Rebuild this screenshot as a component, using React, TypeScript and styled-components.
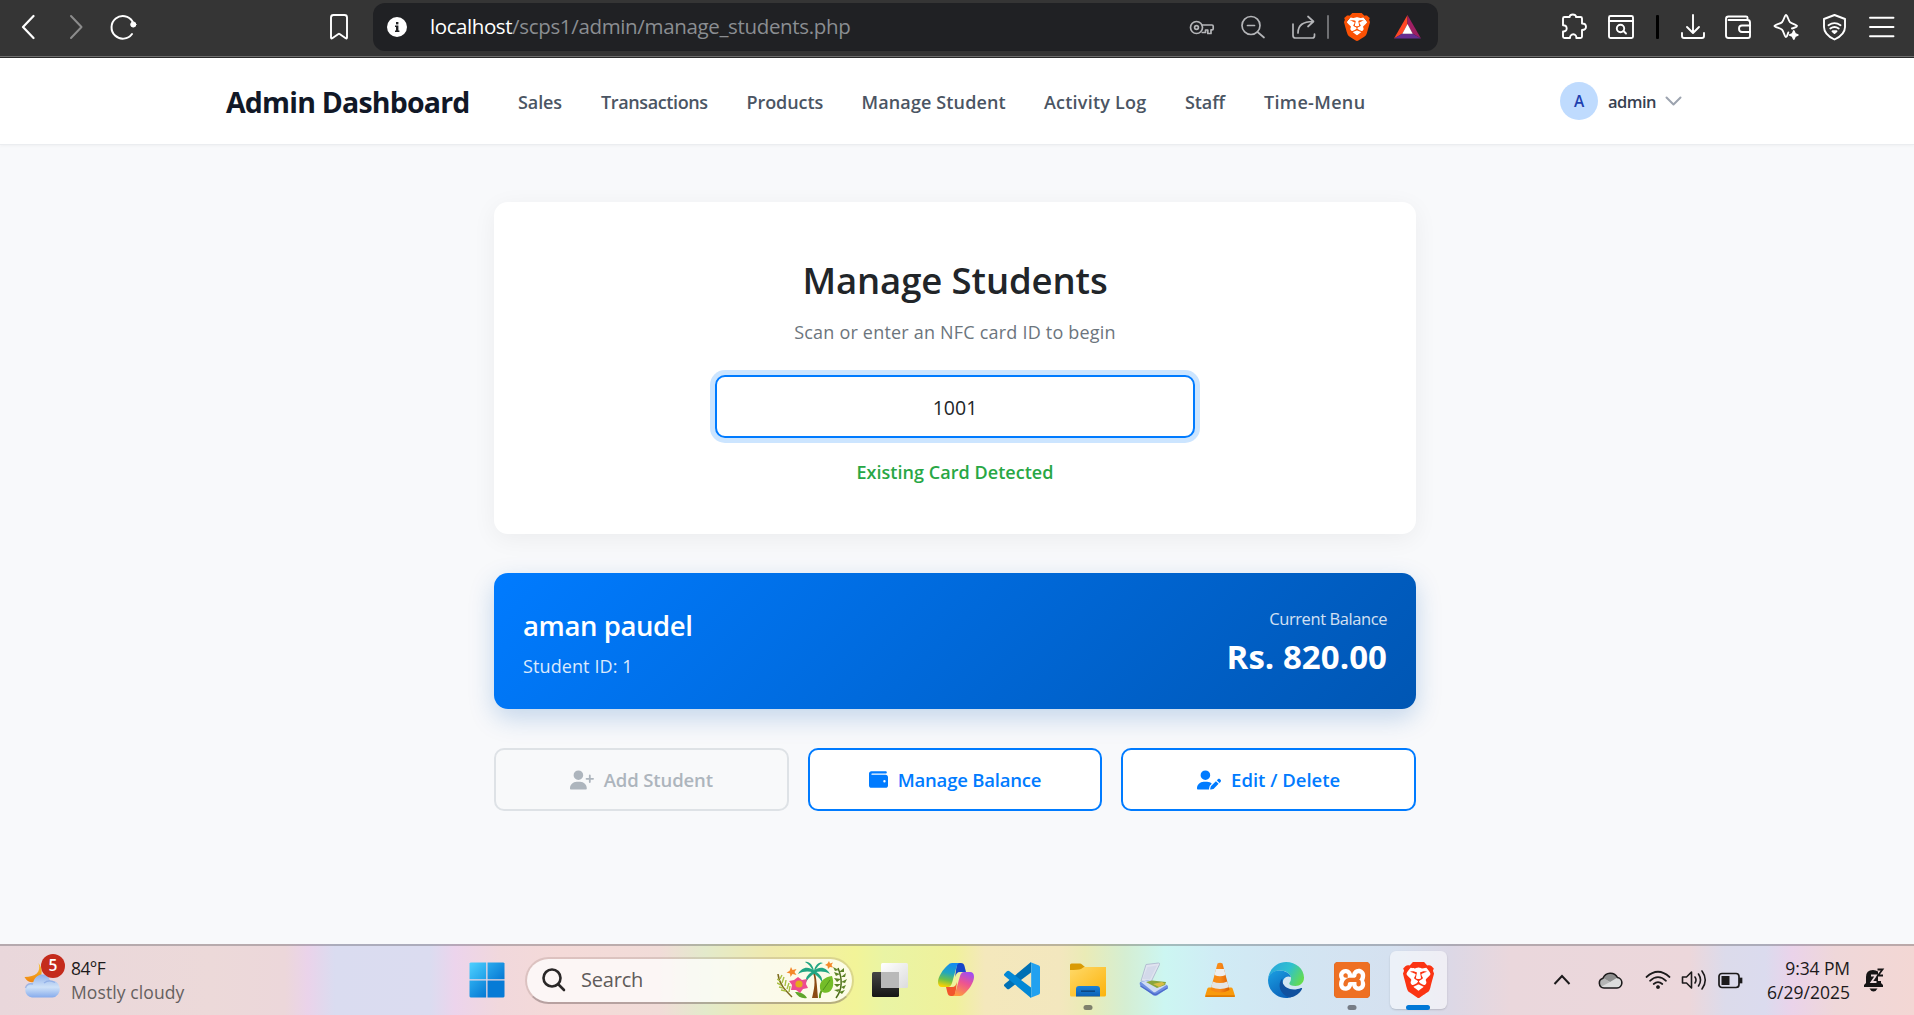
import React from 'react';
import styled, { createGlobalStyle } from 'styled-components';
import { SiBrave, SiXampp } from 'react-icons/si';
import { FaUserPlus, FaWallet, FaUserPen } from 'react-icons/fa6';

const GlobalStyle = createGlobalStyle`
  * { box-sizing: border-box; }
  body {
    margin: 0;
    overflow: hidden;
    font-family: "Open Sans", "Noto Sans", sans-serif;
    background: #f8f9fb;
  }
  svg { display: block; flex: none; }
`;

const Screen = styled.div`
  width: 1914px;
  height: 1015px;
  display: flex;
  flex-direction: column;
`;

/* ---------- browser toolbar ---------- */

const BrowserBar = styled.header`
  height: 58px;
  flex: none;
  display: flex;
  align-items: center;
  padding: 0 18px 4px 21px;
  background: #353535;
  border-bottom: 1px solid #2b2b2b;
  box-shadow: inset 0 -1px 0 #6e6e6e;
`;

const ToolIcon = styled.span<{ $gap?: number; $color?: string }>`
  display: flex;
  flex: none;
  margin-left: ${(p) => p.$gap ?? 0}px;
  color: ${(p) => p.$color ?? '#ffffff'};
`;

const AddressBar = styled.div`
  width: 1065px;
  height: 48px;
  flex: none;
  margin-left: 24px;
  padding: 0 16px 0 14px;
  display: flex;
  align-items: center;
  border-radius: 12px;
  background: #202124;
`;

const InfoDot = styled.span`
  width: 20px;
  height: 20px;
  border-radius: 50%;
  background: #ffffff;
  display: flex;
  align-items: center;
  justify-content: center;
`;

const Url = styled.span`
  flex: 1;
  margin: 0 0 1px 23px;
  font-size: 20.5px;
  line-height: 28px;
  letter-spacing: -0.34px;
  color: #8b8e92;
  white-space: nowrap;
`;

const Host = styled.span`
  color: #ffffff;
  letter-spacing: -0.42px;
`;

const Divider = styled.span<{ $dark?: boolean; $gap: number }>`
  width: ${(p) => (p.$dark ? 3 : 2)}px;
  height: 24px;
  margin-left: ${(p) => p.$gap}px;
  border-radius: 1px;
  background: ${(p) => (p.$dark ? '#000000' : '#6f7073')};
`;

const Extensions = styled.div`
  display: flex;
  align-items: center;
  margin-left: 122px;
`;

const LionBadge = styled.span<{ $gap?: number }>`
  display: flex;
  margin-left: ${(p) => p.$gap ?? 0}px;
`;

/* ---------- page ---------- */

const Page = styled.div`
  flex: 1;
  display: flex;
  flex-direction: column;
  background: #f8f9fb;
`;

const NavBar = styled.nav`
  height: 87px;
  flex: none;
  display: flex;
  align-items: center;
  padding: 2px 232px 0 226px;
  background: #ffffff;
  border-bottom: 1px solid #ebedf0;
  box-shadow: 0 1px 3px rgba(0, 0, 0, 0.04);
`;

const Brand = styled.div`
  width: 292px;
  font-size: 28.5px;
  line-height: 40px;
  font-weight: 700;
  letter-spacing: -0.8px;
  color: #111827;
  white-space: nowrap;
`;

const NavLinks = styled.div`
  display: flex;
  gap: 38px;
`;

const NavLink = styled.a<{ $width: number; $track: number }>`
  width: ${(p) => p.$width}px;
  font-size: 18px;
  line-height: 28px;
  font-weight: 600;
  letter-spacing: ${(p) => p.$track}px;
  color: #4b5563;
  white-space: nowrap;
`;

const Account = styled.div`
  margin: 0 0 2px auto;
  display: flex;
  align-items: center;
`;

const Avatar = styled.span`
  width: 38px;
  height: 38px;
  border-radius: 50%;
  display: flex;
  align-items: center;
  justify-content: center;
  background: #bfdbfe;
  color: #1e40af;
  font-size: 15.5px;
  font-weight: 600;
  line-height: 22px;
`;

const AccountName = styled.span`
  width: 57px;
  margin: 2px 0 0 10px;
  font-size: 16.5px;
  line-height: 24px;
  font-weight: 600;
  letter-spacing: -0.55px;
  color: #374151;
`;

const Main = styled.main`
  width: 922px;
  margin: 57px auto 0 494px;
  display: flex;
  flex-direction: column;
`;

const ScanCard = styled.section`
  height: 332px;
  padding-top: 55px;
  display: flex;
  flex-direction: column;
  align-items: center;
  border-radius: 14px;
  background: #ffffff;
  box-shadow: 0 5px 24px rgba(0, 0, 0, 0.055);
`;

const Heading = styled.h1`
  margin: 0 0 15px;
  font-size: 36.5px;
  line-height: 46px;
  font-weight: 600;
  letter-spacing: -0.1px;
  color: #212529;
`;

const Hint = styled.p`
  margin: 0 0 29px;
  font-size: 18px;
  line-height: 28px;
  letter-spacing: 0.2px;
  color: #6c757d;
`;

const CardInput = styled.input`
  width: 480px;
  height: 63px;
  margin: 0 0 20px;
  padding: 2px 0 0;
  border: 2px solid #007bff;
  border-radius: 10px;
  outline: none;
  box-shadow: 0 0 0 5px rgba(0, 123, 255, 0.2);
  background: #ffffff;
  text-align: center;
  font-family: inherit;
  font-size: 19.5px;
  color: #212529;
`;

const Status = styled.p`
  margin: 0;
  font-size: 18px;
  line-height: 28px;
  font-weight: 600;
  letter-spacing: 0.04px;
  color: #28a745;
`;

const BalanceCard = styled.section`
  height: 136px;
  margin-top: 39px;
  padding: 34px 29px 0;
  display: flex;
  justify-content: space-between;
  border-radius: 14px;
  background: linear-gradient(135deg, #007bff, #0056b3);
  box-shadow: 0 9px 26px rgba(0, 86, 179, 0.22);
  color: #ffffff;
`;

const Column = styled.div<{ $end?: boolean }>`
  display: flex;
  flex-direction: column;
  align-items: ${(p) => (p.$end ? 'flex-end' : 'flex-start')};
`;

const StudentName = styled.div`
  margin: 1px 0 9px;
  font-size: 27.5px;
  line-height: 36px;
  font-weight: 600;
  letter-spacing: -0.4px;
`;

const StudentId = styled.div`
  font-size: 18px;
  line-height: 26px;
  letter-spacing: 0.1px;
  opacity: 0.85;
`;

const BalanceLabel = styled.div`
  margin-bottom: 4px;
  font-size: 16.5px;
  line-height: 24px;
  letter-spacing: -0.42px;
  opacity: 0.82;
`;

const BalanceValue = styled.div`
  font-size: 33px;
  line-height: 44px;
  font-weight: 700;
  letter-spacing: 0.05px;
`;

const Actions = styled.div`
  margin-top: 39px;
  display: grid;
  grid-template-columns: repeat(3, 1fr);
  gap: 19px;
`;

const ActionButton = styled.button<{ $track: number }>`
  height: 63px;
  padding: 0;
  display: flex;
  align-items: center;
  justify-content: center;
  gap: 10px;
  border: 2px solid #007bff;
  border-radius: 10px;
  background: #ffffff;
  color: #007bff;
  font-family: inherit;
  font-size: 18.5px;
  line-height: 28px;
  font-weight: 600;
  letter-spacing: ${(p) => p.$track}px;
  white-space: nowrap;

  &:disabled {
    border-color: #dee2e6;
    background: #f8f9fa;
    color: #adb5bd;
  }
`;

/* ---------- taskbar ---------- */

const TaskBar = styled.footer`
  height: 71px;
  flex: none;
  display: flex;
  align-items: center;
  padding: 1px 29px 0 24px;
  box-shadow: inset 0 2px 0 rgba(90, 90, 95, 0.36);
  background: linear-gradient(
    90deg,
    #e9d7db 0, #ecd9d9 210px, #ecd7da 285px, #ead3ea 308px, #dadcf0 335px,
    #dbdcf0 430px, #ecd4ec 455px, #f1d8dc 500px, #f4dad8 560px, #f1dcd8 660px,
    #e3eacb 705px, #f0eaae 770px, #f2f498 855px, #e9f4a4 885px, #f0f19b 955px,
    #f4e8bc 985px, #f3e7be 1060px, #eaebb6 1085px, #d5eed2 1125px, #ccf6f2 1165px,
    #d0ecf5 1215px, #d2e6f3 1280px, #d5e1f0 1390px, #dcd8e6 1450px, #ead7dc 1510px,
    #ecd7db 1690px, #dcdbeb 1725px, #dbdbee 1765px, #ead3ea 1792px, #efd7d9 1835px,
    #f3d7d4 1914px
  );
`;

const Weather = styled.div`
  position: relative;
  width: 445px;
  display: flex;
  align-items: center;
  gap: 10px;
`;

const AlertBadge = styled.span`
  position: absolute;
  left: 17px;
  top: -2px;
  width: 24px;
  height: 24px;
  border-radius: 50%;
  background: #c42b1c;
  color: #ffffff;
  text-align: center;
  font-size: 15.5px;
  line-height: 23px;
  font-weight: 600;
`;

const Lines = styled.div<{ $end?: boolean }>`
  display: flex;
  flex-direction: column;
  align-items: ${(p) => (p.$end ? 'flex-end' : 'flex-start')};
`;

const Line = styled.span<{ $muted?: boolean; $track: number }>`
  font-size: 17.5px;
  line-height: 24px;
  letter-spacing: ${(p) => p.$track}px;
  color: ${(p) => (p.$muted ? '#65605f' : '#1c1a1b')};
  white-space: nowrap;
`;

const SearchPill = styled.div`
  width: 329px;
  height: 47px;
  margin: 0 3px 0 20px;
  padding: 0 5px 0 15px;
  display: flex;
  align-items: center;
  border: 2px solid rgba(120, 90, 80, 0.18);
  border-bottom-color: rgba(100, 85, 85, 0.42);
  border-radius: 24px;
  background: rgba(255, 255, 255, 0.75);
  background-clip: padding-box;
`;

const SearchLabel = styled.span`
  flex: 1;
  margin: 0 0 0 15px;
  font-size: 20px;
  line-height: 28px;
  letter-spacing: -0.2px;
  color: #5f5b5a;
`;

const TaskSlot = styled.div`
  position: relative;
  width: 66px;
  height: 69px;
  display: flex;
  align-items: center;
  justify-content: center;
`;

const ActiveTile = styled.div`
  width: 57px;
  height: 58px;
  display: flex;
  align-items: center;
  justify-content: center;
  border-radius: 6px;
  background: rgba(255, 255, 255, 0.55);
  box-shadow: 0 1px 2px rgba(0, 0, 0, 0.16);
`;

const RunMark = styled.span<{ $active?: boolean }>`
  position: absolute;
  bottom: 5px;
  left: 50%;
  width: ${(p) => (p.$active ? 24 : 9)}px;
  height: 5px;
  transform: translateX(-50%);
  border-radius: 3px;
  background: ${(p) => (p.$active ? '#0078d7' : 'rgba(40, 40, 45, 0.55)')};
`;

const Tray = styled.div`
  margin-left: auto;
  display: flex;
  align-items: center;
`;

const TrayIcon = styled.span<{ $gap?: number }>`
  display: flex;
  margin-left: ${(p) => p.$gap ?? 0}px;
`;

const Clock = styled(Lines)`
  width: 107px;
`;

/* ---------- drawings ---------- */

type LineIconProps = { w: number; h?: number; sw?: number; children: React.ReactNode };

const LineIcon = ({ w, h = 28, sw = 1.9, children }: LineIconProps) => (
  <svg
    width={w}
    height={h}
    viewBox={`0 0 ${w} ${h}`}
    fill="none"
    stroke="currentColor"
    strokeWidth={sw}
    strokeLinecap="round"
    strokeLinejoin="round"
  >
    {children}
  </svg>
);

const Lion = ({ w, h, color }: { w: number; h: number; color: string }) => (
  <svg width={w} height={h} viewBox="1.8 0 20.400 24" preserveAspectRatio="none">
    <path d="M7 3.500h10l3 4-3 10L12 21.500l-5-4-3-10z" fill="#fff" />
    <SiBrave size={24} color={color} />
  </svg>
);

const WeatherArt = () => (
  <svg width="37" height="37" viewBox="0 0 37 37">
    <defs>
      <linearGradient id="cloud" x1="0" y1="0" x2="0" y2="1">
        <stop offset="0" stopColor="#8fb0ea" />
        <stop offset="0.55" stopColor="#cfe2f8" />
        <stop offset="1" stopColor="#86abec" />
      </linearGradient>
      <linearGradient id="moon" x1="0" y1="0" x2="0" y2="1">
        <stop offset="0" stopColor="#f9c32c" />
        <stop offset="1" stopColor="#ef8410" />
      </linearGradient>
    </defs>
    <path d="M14.500 1c3 9-3 14-14 14C3 20 8 21 12 20c6-4 8-12 2.500-19z" fill="url(#moon)" />
    <path d="M8 35.500a7.300 7.300 0 0 1-.5-14.500c.8 0 1.300-.2 1.800-1C11 14.500 15 12.500 18 12.500c4 0 7 2.400 8 6a8.500 8.500 0 0 1 2.500 17z" fill="url(#cloud)" />
    <path d="M9 22q-6-1.500-7.500 4M20 21q5-4 11-.5" stroke="#7d9fe0" strokeWidth="1.400" fill="none" opacity=".6" />
  </svg>
);

const StartLogo = () => (
  <svg width="36" height="36" viewBox="0 0 36 36">
    <defs>
      <linearGradient id="win" x1="0" y1="0" x2="1" y2="1">
        <stop offset="0" stopColor="#4fd0ff" />
        <stop offset="1" stopColor="#1fa0e8" />
      </linearGradient>
      <linearGradient id="win2" x1="0" y1="0" x2="1" y2="1">
        <stop offset="0" stopColor="#2aabee" />
        <stop offset="1" stopColor="#0678d3" />
      </linearGradient>
    </defs>
    <path d="M1.500.5H17.200V17.200H.5V1.500z" fill="url(#win)" />
    <path d="M18.500.5H34.500l1 1V17.200H18.500z" fill="url(#win2)" />
    <path d="M.5 18.600H17.200V35.500H1.500l-1-1z" fill="url(#win2)" />
    <path d="M18.500 18.600H35.500V34.500l-1 1H18.500z" fill="#067bd6" />
  </svg>
);

const TropicArt = () => (
  <svg width="70" height="38" viewBox="0 0 70 38" fill="none">
    <path d="M36 12c3 8 1 17-1 25h6c-1-9-1-17-3-25z" fill="#8a4b14" />
    <g fill="#22a582">
      <path d="M37 10C31 4 24 7 21 13c6-3 11-3 16-1z" />
      <path d="M37 10c6-6 13-3 16 3-6-3-11-3-16-1z" />
      <path d="M37 10C32 12 28 16 29 21c3-5 6-7 9-9z" />
      <path d="M37 10c5 2 9 6 8 11-3-5-6-7-9-9z" />
      <path d="M37 10C36 4 32 0 28 1c4 2 6 5 8 9z" />
      <path d="M37 10c1-6 5-10 9-8-4 1-6 4-8 8z" />
    </g>
    <path d="M43 37c-1-6 3-8 5-14" stroke="#5c9a1d" strokeWidth="2" />
    <path d="M55 15c-7 1-13 5-12 12 0 4 5 6 9 4 5-3 5-10 3-16z" fill="#74bd28" />
    <path d="M53 19l-7 10" stroke="#4e921b" />
    <path d="M59 37c6-8 7-18 2-30" stroke="#4f6f1c" strokeWidth="1.500" />
    <g fill="#5d8426">
      <path d="M62 9l-6-3 2 4zM63 13l-6-2 2 4zM64 18l-7-1 3 4zM64 23l-7 0 3 3zM63 28l-6 1 4 2z" />
      <path d="M62 11l5-4 0 4zM64 16l5-4-1 4zM64 21l6-3-2 4zM64 26l5-2-2 4zM62 31l6-2-3 4z" />
    </g>
    <path d="M1 13c1 10 7 16 14 23" stroke="#7c6a1d" strokeWidth="1.500" />
    <g stroke="#a9bf43" strokeWidth="1.400">
      <path d="M3 20l-3-2M4 24l-4-2M6 27l-4-1M9 30l-5-1M3 18l2-4M5 22l2-6M8 25l1-6M10 28l2-6M12 31l1-6" />
    </g>
    <path d="M18 31c5 0 9 1 12 6-5 1-9-1-12-6z" fill="#5fa52a" />
    <path d="M21 16l4 3 5-1-1 5 2 4-5 1-3 4-4-3-5 0 1-5-3-4 5-1z" fill="#ee4c8f" />
    <circle cx="22" cy="23" r="3.600" fill="#e6a91e" />
    <path d="M14 6l1.500 3 4-1-2 3 2 3-4-1-2 3-.5-3.500-3.500-1 3-1.500z" fill="#f5892a" />
    <path d="M52 0l1 2.500 3-1-1.500 2.500 1.500 2.500-3-.5-2 2-.5-3-2.500-1 2.500-1.500z" fill="#f5892a" />
  </svg>
);

const TaskViewArt = () => (
  <svg width="36" height="36" viewBox="0 0 36 36">
    <defs>
      <linearGradient id="tvd" x1="0" y1="0" x2="0" y2="1">
        <stop offset="0" stopColor="#454545" />
        <stop offset="1" stopColor="#161616" />
      </linearGradient>
      <linearGradient id="tvl" x1="0" y1="0" x2="1" y2="1">
        <stop offset="0" stopColor="#ffffff" />
        <stop offset="1" stopColor="#dcdcdc" />
      </linearGradient>
    </defs>
    <rect x="0" y="10" width="27" height="25" rx="1.500" fill="url(#tvd)" />
    <rect x="9" y="1" width="27" height="25" rx="1.500" fill="url(#tvl)" />
    <rect x="9" y="10" width="18" height="16" fill="#b9b9b9" />
  </svg>
);

const CopilotArt = () => (
  <svg width="38" height="36" viewBox="-1 -1 38 36">
    <defs>
      <linearGradient id="cpa" x1="0.500" y1="0" x2="0.300" y2="1">
        <stop offset="0" stopColor="#168bf0" />
        <stop offset="0.400" stopColor="#20a6c0" />
        <stop offset="0.700" stopColor="#6cc04a" />
        <stop offset="1" stopColor="#ffd400" />
      </linearGradient>
      <linearGradient id="cpb" x1="0.700" y1="0" x2="0.300" y2="1">
        <stop offset="0" stopColor="#a24df0" />
        <stop offset="0.450" stopColor="#ee5490" />
        <stop offset="1" stopColor="#ff9a3c" />
      </linearGradient>
    </defs>
    <path d="M19 0h4c2 0 3 1 3.500 3l1.500 6h-6c-3 0-4 2-5 5z" fill="#1746c9" />
    <path d="M17 33h-4c-2 0-3-1-3.500-3L8 24h6c3 0 4-2 5-5z" fill="#f2552c" />
    <path d="M10 2Q11.500 0 14 0h8q-2.500 0-3.500 4L14 20q-1.300 4-4 4H4Q0 24 0 19C0 14 5 6 10 2z" fill="url(#cpa)" />
    <path d="M26 31q-1.500 2-4 2h-8q2.500 0 3.500-4L22 13q1.300-4 4-4h6q4 0 4 5c0 5-5 13-10 17z" fill="url(#cpb)" />
  </svg>
);

const CodeArt = () => (
  <svg width="36" height="36" viewBox="0 0 36 36">
    <path d="M27 0v10.500L5.500 26.800a2 2 0 0 1-2.600-.1L.7 24.600a1.600 1.600 0 0 1 0-2.500z" fill="#0070b4" />
    <path d="M27 36V25.500L5.500 9.200a2 2 0 0 0-2.600.1L.7 11.400a1.600 1.600 0 0 0 0 2.500z" fill="#0388d6" />
    <path d="M26 0l9 3.500q1 .5 1 1.700V30.800q0 1.200-1 1.700L26 36q1.200-.5 1.200-2V2q0-1.500-1.200-2z" fill="#22a1f0" />
  </svg>
);

const FolderArt = () => (
  <svg width="36" height="36" viewBox="0 0 36 36">
    <defs>
      <linearGradient id="fold" x1="0" y1="0" x2="1" y2="1">
        <stop offset="0" stopColor="#ffd968" />
        <stop offset="1" stopColor="#fcb30c" />
      </linearGradient>
      <linearGradient id="tray" x1="0" y1="0" x2="0" y2="1">
        <stop offset="0" stopColor="#1c82d8" />
        <stop offset="1" stopColor="#0c5fb4" />
      </linearGradient>
    </defs>
    <path d="M0 3q0-1.500 1.500-1.500H10q1 0 2 1L15 5H35v5H0z" fill="#d99a05" />
    <path d="M0 8q8 0 11-1l3-2H36V33q0 1.500-1.500 1.500H1.500Q0 34.500 0 33z" fill="url(#fold)" />
    <path d="M6 34.500V27q0-3 3-3H27q3 0 3 3v7.500z" fill="url(#tray)" />
    <path d="M11 29.200H25" stroke="#0b4684" strokeWidth="1.600" />
  </svg>
);

const ScannerArt = () => (
  <svg width="32" height="36" viewBox="0 0 32 36">
    <path d="M8 2.500L20.500 1q1.500 0 1 1.500L13 20 3 19z" fill="#dfe3ef" stroke="#aab2cc" strokeWidth=".8" />
    <path d="M9.500 5L19 3.500l-7 14-7.500-.5z" fill="#d3d9ea" />
    <path d="M2 20l9-2 18 5q1.500 1 1 3L19 33.500q-2 .8-3.500 0L2.500 24q-1.500-2-.5-4z" fill="#6f8fe2" />
    <path d="M3 20l9-2 16.500 5-11 7q-1 .5-2 0z" fill="#cfdcf4" />
    <path d="M8 20l6-1.500L28 20l-1 3-8 3z" fill="#8aa53c" />
    <path d="M15 22l9-2 3 2-6 3z" fill="#d9bd45" />
    <path d="M2.500 24l13 8q2 .7 3.500 0L29.500 26" stroke="#4c6bcb" strokeWidth="1.400" fill="none" />
  </svg>
);

const ConeArt = () => (
  <svg width="30" height="36" viewBox="0 0 30 36">
    <defs>
      <linearGradient id="cone" x1="0" x2="1">
        <stop offset="0" stopColor="#f58a10" />
        <stop offset="0.500" stopColor="#f98a18" />
        <stop offset="1" stopColor="#d85f02" />
      </linearGradient>
    </defs>
    <path d="M4 25.500h22q1.200 0 1.700 1.200L30 34q.2 1-1 1H1q-1.200 0-1-1l2.300-7.300q.5-1.200 1.700-1.200z" fill="#f99a0c" />
    <path d="M1 33.200h28.500V35H.5z" fill="#e07c03" />
    <path d="M12.500 1.500q2.500-1.500 5 0L24.500 28q-9.500 5-19 0z" fill="url(#cone)" />
    <path d="M11 7h8l1.600 6q-5.600 2.400-11.200 0z" fill="#eeeeee" />
    <path d="M7.700 19.500q7.300 3.200 14.600 0l1.500 5.700q-8.800 3.400-17.600 0z" fill="#e4e4e4" />
  </svg>
);

const EdgeArt = () => (
  <svg width="36" height="36" viewBox="0 0 36 36">
    <defs>
      <linearGradient id="eg1" x1="0" x2="1" y1="0.300" y2="0.700">
        <stop offset="0" stopColor="#2aa7dc" />
        <stop offset="0.500" stopColor="#2fc0d0" />
        <stop offset="1" stopColor="#66dd4a" />
      </linearGradient>
      <linearGradient id="eg2" x1="0" x2="0.600" y1="0" y2="1">
        <stop offset="0" stopColor="#1ba0e2" />
        <stop offset="1" stopColor="#0a62ba" />
      </linearGradient>
    </defs>
    <path d="M0 17C1 7 9 0 18 0c10 0 18 7 18 15.500C36 21 32 24 27.500 24c-4 0-6.200-1.300-6.200-2.500 0-1.200 1.700-2 1.700-5C23 12 18 8.500 12 8.500 6 8.500 1.500 12 0 17z" fill="url(#eg1)" />
    <path d="M0 18C.5 12 5.500 8.500 11.500 8.500c6 0 10.500 3 11.300 6.500-4-2-8.300 1-8.300 7 0 6 5 11 11 12-3 1.500-5 2-7.500 2C8 36 0 28 0 18z" fill="url(#eg2)" />
    <path d="M14.200 16.500C9 22 11.500 33 22 35.500c5.500-.8 10-4.500 12-8.500.4-1-.3-1.300-1-1-8 3.500-17 .5-18.500-6z" fill="#10519f" />
  </svg>
);

const XamppTile = styled.div`
  width: 36px;
  height: 36px;
  display: flex;
  align-items: center;
  justify-content: center;
  border-radius: 4px;
  overflow: hidden;
  background: radial-gradient(circle, #ffffff 62%, #c8601e 64%);
`;

/* ---------- data ---------- */

const links = [
  { label: 'Sales', width: 45, track: -0.1 },
  { label: 'Transactions', width: 107.5, track: -0.38 },
  { label: 'Products', width: 77, track: -0.07 },
  { label: 'Manage Student', width: 144.5, track: 0.13 },
  { label: 'Activity Log', width: 103, track: 0.22 },
  { label: 'Staff', width: 41, track: -0.1 },
  { label: 'Time-Menu', width: 101, track: 0.34 },
];

function Browser() {
  return (
    <BrowserBar>
      <ToolIcon>
        <LineIcon w={14} sw={2.2}><path d="M12.500 3L2 14l10.500 11" /></LineIcon>
      </ToolIcon>
      <ToolIcon $gap={34} $color="#8c8c8c">
        <LineIcon w={14} sw={2}><path d="M2 3l10.500 11L2 25" /></LineIcon>
      </ToolIcon>
      <ToolIcon $gap={27}>
        <LineIcon w={28} sw={2}>
          <path d="M22 21A11.300 11.300 0 1 1 22.500 8.500" />
          <circle cx="23.300" cy="11.500" r="2.600" fill="currentColor" stroke="currentColor" strokeWidth="1" />
        </LineIcon>
      </ToolIcon>
      <ToolIcon $gap={191}>
        <LineIcon w={20}><path d="M2 4.500a2.500 2.500 0 0 1 2.500-2.500h11A2.500 2.500 0 0 1 18 4.500V24.500q0 1.500-1.300.7L10.600 21q-.6-.4-1.200 0l-6.100 4.200Q2 26 2 24.500z" /></LineIcon>
      </ToolIcon>
      <AddressBar>
        <InfoDot>
          <svg width="6" height="12" viewBox="0 0 6 12" fill="#202124"><rect x="2" y="1" width="2.400" height="2.400" /><path d="M1 4.500h3.400v5h1V11H1V9.500h1V6H1z" /></svg>
        </InfoDot>
        <Url><Host>localhost</Host>/scps1/admin/manage_students.php</Url>
        <ToolIcon $color="#b4b5b8">
          <LineIcon w={26} sw={1.7}>
            <circle cx="7.500" cy="14.500" r="6" /><circle cx="7.500" cy="14.500" r="1.900" />
            <path d="M13 12h10q1.200 0 1.200 1.200v2.600q0 1-1 1h-1.200v3.700h-3.200V17h-2.300v2.500h-3.200" />
          </LineIcon>
        </ToolIcon>
        <ToolIcon $gap={25} $color="#b4b5b8">
          <LineIcon w={26} sw={1.7}><circle cx="11" cy="12.500" r="9" /><path d="M17.500 19l6.500 5.500M7.500 12.500h7" /></LineIcon>
        </ToolIcon>
        <ToolIcon $gap={25} $color="#b4b5b8">
          <LineIcon w={26} sw={1.7}>
            <path d="M2 11v11.500Q2 25 4.500 25h17Q23.500 25 23.500 22.500V21" />
            <path d="M7 20c0-8 5-11.500 15-11.500M17 3.500l5.500 5-5.500 5" />
          </LineIcon>
        </ToolIcon>
        <Divider $gap={10} />
        <LionBadge $gap={15}><Lion w={26} h={28} color="#fb5104" /></LionBadge>
        <LionBadge $gap={23}>
          <svg width="29" height="26" viewBox="0 0 29 26">
            <path d="M14.500 1L1 24.500 9.500 19.500 14.500 10z" fill="#ff4724" />
            <path d="M14.500 1L28 24.500 19.500 19.500 14.500 10z" fill="#9e1f63" />
            <path d="M1 24.500H28L19.500 19.500H9.500z" fill="#662d91" />
            <path d="M14.500 10L9.300 19.700H19.700z" fill="#fff" />
          </svg>
        </LionBadge>
      </AddressBar>
      <Extensions>
        <ToolIcon>
          <LineIcon w={28}>
            <path d="M4.500 4h5.200C9.500 2.300 11 1.500 12.800 1.500S16.200 2.300 16 4h4.500Q22 4 22 5.500v5c1.800 0 4 .8 4 3.300S23.800 17 22 17v6.500q0 1.500-1.500 1.500H16.300c.3-1.800-.8-3.700-3-3.700s-3.500 1.900-3.200 3.700H4.500Q3 25 3 23.500V18.500c2.200.2 3.700-1 3.700-3s-1.500-3.300-3.700-3.300V5.500Q3 4 4.500 4z" />
          </LineIcon>
        </ToolIcon>
        <ToolIcon $gap={19}>
          <LineIcon w={28}>
            <rect x="2" y="3" width="24" height="22" rx="1.500" /><path d="M2 8h24" />
            <circle cx="13.500" cy="15.500" r="3.700" /><path d="M16.500 18l2.500 2.500" />
          </LineIcon>
        </ToolIcon>
        <Divider $dark $gap={21} />
        <ToolIcon $gap={21}>
          <LineIcon w={26}><path d="M13 2v17.500M7 14l6 6 6-6M2 20v3q0 2 2 2h18q2 0 2-2v-3" /></LineIcon>
        </ToolIcon>
        <ToolIcon $gap={18}>
          <LineIcon w={28}>
            <path d="M23.500 7V4.500Q23.500 3.500 22 3.500H4.500Q2 3.500 2 6v16.500Q2 25 4.500 25H24q2 0 2-2V9.500Q26 7 23.500 7H4.500" />
            <path d="M26 12.500h-8q-3 0-3 3.200t3 3.300h8" />
          </LineIcon>
        </ToolIcon>
        <ToolIcon $gap={21}>
          <LineIcon w={27}>
            <path d="M19 15.500c3.500-1.300 5-1.500 5-2.500 0-1.200-5.500-2.200-7-3.800S14.300 2 13 2s-2.300 5.600-4 7.200S1.500 11.800 1.500 13s5.800 2 7.500 3.700S11.700 24 13 24c1 0 1.200-1.500 2.300-4.500" />
            <path d="M20.800 18l1.200 2.800 2.800 1.200-2.800 1.200-1.200 2.800-1.200-2.800-2.800-1.200 2.800-1.200z" fill="currentColor" />
          </LineIcon>
        </ToolIcon>
        <ToolIcon $gap={22}>
          <LineIcon w={25}>
            <path d="M12.500 2l10.500 4v8c0 5.500-4 9.500-10.500 12.500C6 23.500 2 19.500 2 14V6z" />
            <path d="M6.500 12.200q6-4.200 12 0M8.300 15.500q4.200-3 8.400 0" /><path d="M10.500 18.300h4l-2 1.700z" fill="currentColor" />
          </LineIcon>
        </ToolIcon>
        <ToolIcon $gap={21}>
          <LineIcon w={27}><path d="M2 4.700h23.500M2 14h23.500M2 23.300h23.500" /></LineIcon>
        </ToolIcon>
      </Extensions>
    </BrowserBar>
  );
}

function Dashboard() {
  return (
    <Page>
      <NavBar>
        <Brand>Admin Dashboard</Brand>
        <NavLinks>
          {links.map((l) => (
            <NavLink key={l.label} $width={l.width} $track={l.track}>{l.label}</NavLink>
          ))}
        </NavLinks>
        <Account>
          <Avatar>A</Avatar>
          <AccountName>admin</AccountName>
          <ToolIcon $color="#9ca3af">
            <LineIcon w={17} h={10} sw={2}><path d="M1.500 1.500l7 7 7-7" /></LineIcon>
          </ToolIcon>
        </Account>
      </NavBar>
      <Main>
        <ScanCard>
          <Heading>Manage Students</Heading>
          <Hint>Scan or enter an NFC card ID to begin</Hint>
          <CardInput defaultValue="1001" />
          <Status>Existing Card Detected</Status>
        </ScanCard>
        <BalanceCard>
          <Column>
            <StudentName>aman paudel</StudentName>
            <StudentId>Student ID: 1</StudentId>
          </Column>
          <Column $end>
            <BalanceLabel>Current Balance</BalanceLabel>
            <BalanceValue>Rs. 820.00</BalanceValue>
          </Column>
        </BalanceCard>
        <Actions>
          <ActionButton disabled $track={-0.12}><FaUserPlus size={24} />Add Student</ActionButton>
          <ActionButton $track={-0.2}><FaWallet size={19} />Manage Balance</ActionButton>
          <ActionButton $track={0}><FaUserPen size={24} />Edit / Delete</ActionButton>
        </Actions>
      </Main>
    </Page>
  );
}

function Desktop() {
  return (
    <TaskBar>
      <Weather>
        <WeatherArt />
        <AlertBadge>5</AlertBadge>
        <Lines>
          <Line $track={-0.6}>84°F</Line>
          <Line $muted $track={0.1}>Mostly cloudy</Line>
        </Lines>
      </Weather>
      <StartLogo />
      <SearchPill>
        <ToolIcon $color="#2a2727">
          <LineIcon w={24} h={24} sw={2.6}><circle cx="10" cy="10" r="8.500" /><path d="M16.500 16.500l5.500 5.500" /></LineIcon>
        </ToolIcon>
        <SearchLabel>Search</SearchLabel>
        <TropicArt />
      </SearchPill>
      <TaskSlot><TaskViewArt /></TaskSlot>
      <TaskSlot><CopilotArt /></TaskSlot>
      <TaskSlot><CodeArt /></TaskSlot>
      <TaskSlot><FolderArt /><RunMark /></TaskSlot>
      <TaskSlot><ScannerArt /></TaskSlot>
      <TaskSlot><ConeArt /></TaskSlot>
      <TaskSlot><EdgeArt /></TaskSlot>
      <TaskSlot><XamppTile><SiXampp size={36} color="#ee7023" /></XamppTile><RunMark /></TaskSlot>
      <TaskSlot><ActiveTile><Lion w={31} h={36} color="#fb3413" /></ActiveTile><RunMark $active /></TaskSlot>
      <Tray>
        <TrayIcon>
          <svg width="18" height="12" viewBox="0 0 18 12" fill="none" stroke="#1c1a1b" strokeWidth="2"><path d="M1.500 10l7.500-8 7.500 8" /></svg>
        </TrayIcon>
        <TrayIcon $gap={27}>
          <svg width="25" height="18" viewBox="0 0 25 18">
            <path d="M6 17a5 5 0 0 1-1-9.800A8 8 0 0 1 19.500 6.500a5.300 5.300 0 0 1-.5 10.500z" fill="#dcdcdc" />
            <path d="M5 7.200A8 8 0 0 1 19.500 6.500L12 11z" fill="#8d8d8d" />
            <path d="M1.500 12.500Q2 7.500 6 7.200L12 11 3.500 15.500z" fill="#b5b5b5" />
            <path d="M6 17a5 5 0 0 1-1-9.800A8 8 0 0 1 19.500 6.500a5.300 5.300 0 0 1-.5 10.500z" fill="none" stroke="#1c1a1b" strokeWidth="1.600" />
          </svg>
        </TrayIcon>
        <TrayIcon $gap={22}>
          <svg width="26" height="20" viewBox="0 0 26 20" fill="none" stroke="#1c1a1b" strokeWidth="1.700" strokeLinecap="round">
            <path d="M1.500 7Q13-3.500 24.500 7M5 10.800q8-7.300 16 0M8.700 14q4.300-3.800 8.600 0" /><circle cx="13" cy="17" r="1.500" fill="#1c1a1b" stroke="none" /><circle cx="13" cy="17" r="1" />
          </svg>
        </TrayIcon>
        <TrayIcon $gap={10}>
          <svg width="26" height="22" viewBox="0 0 26 22" fill="none" stroke="#1c1a1b" strokeWidth="1.600" strokeLinejoin="round" strokeLinecap="round">
            <path d="M1.500 8v6h4l5 5V3l-5 5zM14 8q2 3 0 6M17.500 5q4 6 0 12M21 2q6.500 9 0 18" />
          </svg>
        </TrayIcon>
        <TrayIcon $gap={11}>
          <svg width="25" height="17" viewBox="0 0 25 17" fill="none" stroke="#1c1a1b" strokeWidth="1.700">
            <rect x="1" y="1.500" width="20" height="14" rx="3" /><rect x="3.500" y="4" width="8" height="9" fill="#1c1a1b" stroke="none" /><path d="M22 6.500h1.500v4H22z" fill="#1c1a1b" />
          </svg>
        </TrayIcon>
        <Clock $end>
          <Line $track={-0.11}>9:34 PM</Line>
          <Line $track={0.02}>6/29/2025</Line>
        </Clock>
        <TrayIcon $gap={13}>
          <svg width="22" height="24" viewBox="0 0 22 24">
            <path d="M1 19v-2l2-2V9q0-7 7-7 3 0 5 1.500V13h3v2l2 2v2z" fill="#161415" />
            <path d="M6.500 20.500h8q-1.500 3-4 3t-4-3z" fill="#161415" />
            <path d="M8 7.500h5L8.500 14H13.500" fill="none" stroke="#ecd9dc" strokeWidth="1.800" />
            <path d="M14.500 1.500h5l-4.500 6h5" fill="none" stroke="#161415" strokeWidth="1.800" />
          </svg>
        </TrayIcon>
      </Tray>
    </TaskBar>
  );
}

export default function App() {
  return (
    <Screen>
      <GlobalStyle />
      <Browser />
      <Dashboard />
      <Desktop />
    </Screen>
  );
}
